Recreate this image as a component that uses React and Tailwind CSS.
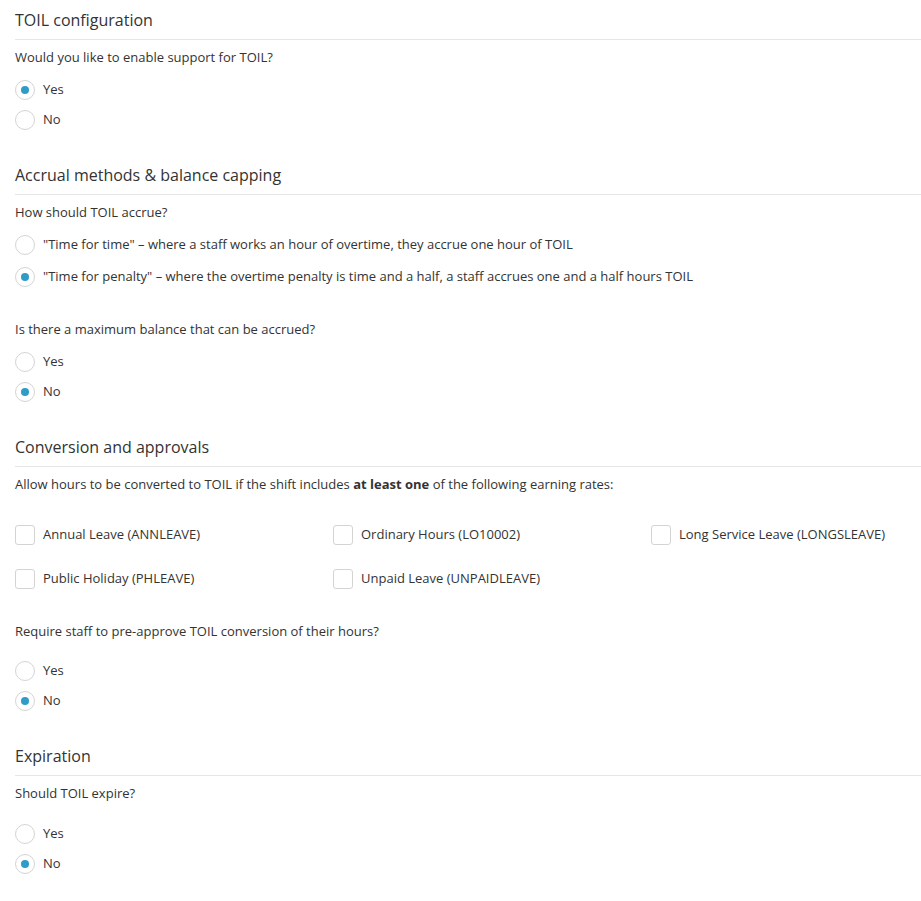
import React from 'react'

function Heading({ children }) {
  return (
    <h3 className="pt-2 pb-[7px] border-b border-[#e6e6e6] text-[16px] leading-6 text-[#333]">{children}</h3>
  )
}

function Question({ children, className = '' }) {
  return <p className={`mt-2 text-[13px] leading-[18px] text-[#333] ${className}`}>{children}</p>
}

function Radio({ label, checked, h = 'h-[30px]' }) {
  return (
    <label className={`flex items-center gap-2 pt-[2px] ${h} cursor-pointer`}>
      <span className="w-5 h-5 rounded-full border border-[#d4d4d4] bg-white flex items-center justify-center shrink-0">
        {checked && <span className="w-2 h-2 rounded-full bg-[#2f9bc6]" />}
      </span>
      <span className="text-[13px] text-[#333]">{label}</span>
    </label>
  )
}

function Checkbox({ label }) {
  return (
    <label className="flex items-center gap-2 pt-[2px] h-[30px] cursor-pointer">
      <span className="w-5 h-5 rounded-[3px] border border-[#d4d4d4] bg-white shrink-0" />
      <span className="text-[13px] text-[#333]">{label}</span>
    </label>
  )
}

export default function App() {
  return (
    <div className="pl-[15px] bg-white min-h-[901px]" style={{ fontFamily: '"Open Sans", "Noto Sans", sans-serif' }}>
      <section>
        <Heading>TOIL configuration</Heading>
        <Question>Would you like to enable support for TOIL?</Question>
        <div className="mt-2">
          <Radio label="Yes" checked />
          <Radio label="No" />
        </div>
      </section>

      <section className="mt-[21px]">
        <Heading>Accrual methods &amp; balance capping</Heading>
        <Question>How should TOIL accrue?</Question>
        <div className="mt-[7px]">
          <Radio h="h-8" label={'"Time for time" – where a staff works an hour of overtime, they accrue one hour of TOIL'} />
          <Radio h="h-8" checked label={'"Time for penalty" – where the overtime penalty is time and a half, a staff accrues one and a half hours TOIL'} />
        </div>
        <Question className="mt-[28px]">Is there a maximum balance that can be accrued?</Question>
        <div className="mt-2">
          <Radio label="Yes" />
          <Radio label="No" checked />
        </div>
      </section>

      <section className="mt-[21px]">
        <Heading>Conversion and approvals</Heading>
        <Question>
          Allow hours to be converted to TOIL if the shift includes <strong className="font-bold">at least one</strong> of the following earning rates:
        </Question>
        <div className="mt-[26px] grid grid-cols-[318px_318px_1fr] gap-y-[14px]">
          <Checkbox label="Annual Leave (ANNLEAVE)" />
          <Checkbox label="Ordinary Hours (LO10002)" />
          <Checkbox label="Long Service Leave (LONGSLEAVE)" />
          <Checkbox label="Public Holiday (PHLEAVE)" />
          <Checkbox label="Unpaid Leave (UNPAIDLEAVE)" />
        </div>
        <Question className="mt-[29px]">Require staff to pre-approve TOIL conversion of their hours?</Question>
        <div className="mt-[15px]">
          <Radio label="Yes" />
          <Radio label="No" checked />
        </div>
      </section>

      <section className="mt-[21px]">
        <Heading>Expiration</Heading>
        <Question>Should TOIL expire?</Question>
        <div className="mt-4">
          <Radio label="Yes" />
          <Radio label="No" checked />
        </div>
      </section>
    </div>
  )
}
